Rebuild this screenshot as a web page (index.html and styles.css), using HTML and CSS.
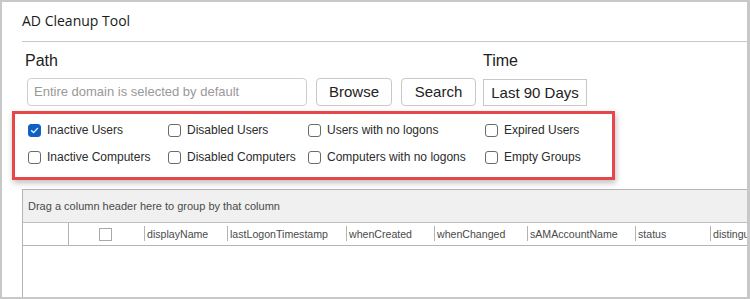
FILE: index.html
```html
<!DOCTYPE html>
<html>
<head>
<meta charset="utf-8">
<link rel="stylesheet" href="styles.css">
</head>
<body>
<div class="frame">
  <div class="inner">
    <div class="title">AD Cleanup Tool</div>
    <div class="controls">
      <div class="group">
        <div class="label">Path</div>
        <div class="row">
          <div class="input">Entire domain is selected by default</div>
          <div class="btn browse">Browse</div>
          <div class="btn search">Search</div>
        </div>
      </div>
      <div class="group">
        <div class="label">Time</div>
        <div class="row">
          <div class="btn time">Last 90 Days</div>
        </div>
      </div>
    </div>
    <div class="options">
      <label class="opt"><span class="cb checked"><svg viewBox="0 0 13 13" width="13" height="13"><path d="M3.6 6.7 L5.6 8.6 L9.5 4.4" fill="none" stroke="#fff" stroke-width="1.3" stroke-linecap="round" stroke-linejoin="round"/></svg></span>Inactive Users</label>
      <label class="opt"><span class="cb"></span>Disabled Users</label>
      <label class="opt"><span class="cb"></span>Users with no logons</label>
      <label class="opt"><span class="cb"></span>Expired Users</label>
      <label class="opt"><span class="cb"></span>Inactive Computers</label>
      <label class="opt"><span class="cb"></span>Disabled Computers</label>
      <label class="opt"><span class="cb"></span>Computers with no logons</label>
      <label class="opt"><span class="cb"></span>Empty Groups</label>
    </div>
    <div class="grid">
      <div class="grouppanel">Drag a column header here to group by that column</div>
      <div class="header">
        <div class="hc first"></div>
        <div class="hc chk"><span class="hcb"></span></div>
        <div class="hc c1">displayName</div>
        <div class="hc c2">lastLogonTimestamp</div>
        <div class="hc c3">whenCreated</div>
        <div class="hc c4">whenChanged</div>
        <div class="hc c5">sAMAccountName</div>
        <div class="hc c6">status</div>
        <div class="hc c7">distinguishedName</div>
      </div>
      <div class="body"></div>
    </div>
  </div>
</div>
</body>
</html>
```

FILE: styles.css
```css
html, body {
  margin: 0;
  padding: 0;
  background: #fff;
}
.frame {
  box-sizing: border-box;
  width: 750px;
  height: 299px;
  border: 2px solid #c8c8c8;
  border-right-width: 3px;
  overflow: hidden;
  font-family: "Liberation Sans", Arial, sans-serif;
  color: #222;
}
.inner {
  padding-left: 20px;
  display: flex;
  flex-direction: column;
}
.title {
  height: 39px;
  line-height: 38px;
  font-family: "Open Sans", "Noto Sans", sans-serif;
  font-size: 14px;
  color: #1a1a1a;
  border-bottom: 1px solid #c8c8c8;
}
.controls {
  display: flex;
  gap: 7px;
  margin-top: 10px;
  padding-left: 5px;
}
.group {
  display: flex;
  flex-direction: column;
  gap: 8px;
}
.label {
  font-size: 16px;
  line-height: 18px;
  margin-left: -2px;
  color: #222;
}
.group + .group .label {
  margin-left: 0;
}
.row {
  display: flex;
  gap: 9px;
}
.input {
  box-sizing: border-box;
  width: 280px;
  height: 28px;
  border: 1px solid #cfcfcf;
  border-radius: 4px;
  padding-left: 6px;
  font-size: 13px;
  line-height: 26px;
  color: #999;
}
.btn {
  box-sizing: border-box;
  height: 28px;
  border: 1px solid #c8c8c8;
  border-radius: 4px;
  font-size: 15px;
  line-height: 26px;
  text-align: center;
  color: #222;
}
.browse { width: 76px; }
.search { width: 75px; }
.time {
  width: 104px;
  height: 27px;
  margin-top: 1px;
  border-radius: 0;
  line-height: 25px;
}
.options {
  box-sizing: border-box;
  width: 603px;
  height: 69px;
  margin-left: -10px;
  margin-top: 5px;
  border: 3px solid #e6474a;
  box-shadow: 1px 3px 6px rgba(0, 0, 0, 0.25);
  padding: 10px 0 0 13px;
  display: grid;
  grid-template-columns: 140px 140px 177px auto;
  grid-auto-rows: 27px;
  align-content: start;
}
.opt {
  display: flex;
  align-items: flex-start;
  gap: 6px;
  font-family: "Liberation Sans", Arial, sans-serif;
  font-size: 12px;
  line-height: 13px;
  color: #2b2b2b;
}
.cb {
  box-sizing: border-box;
  width: 13px;
  height: 13px;
  border: 1px solid #6b6b6b;
  border-radius: 3px;
  background: #fff;
  flex: none;
  display: block;
}
.cb.checked {
  background: #0f62c4;
  border-color: #0f62c4;
  position: relative;
}
.cb.checked svg {
  position: absolute;
  left: -1px;
  top: -1px;
}
.grid {
  margin-top: 9px;
  height: 120px;
  border: 1px solid #b4b4b4;
  border-right: none;
  display: flex;
  flex-direction: column;
}
.grouppanel {
  height: 32px;
  background: #f0f0f0;
  border-bottom: 1px solid #bdbdbd;
  font-size: 11px;
  line-height: 32px;
  padding-left: 5px;
  color: #4a4a4a;
}
.header {
  display: flex;
  height: 22px;
  border-bottom: 1px solid #b4b4b4;
  font-size: 10.6px;
  color: #4a4a4a;
  white-space: nowrap;
  overflow: hidden;
}
.hc {
  box-sizing: border-box;
  flex: none;
  height: 22px;
  line-height: 22px;
  padding-left: 3px;
  position: relative;
  overflow: hidden;
}
.hc::before {
  content: "";
  position: absolute;
  left: 0;
  top: 3px;
  bottom: 4px;
  border-left: 1px solid #b4b4b4;
}
.first {
  width: 45px;
}
.first::before { display: none; }
.chk {
  width: 76px;
  border-left: 1px solid #b4b4b4;
  display: flex;
  align-items: center;
  padding-left: 30px;
}
.chk::before { display: none; }
.hcb {
  display: block;
  width: 13px;
  height: 13px;
  box-sizing: border-box;
  border: 1px solid #a8a8a8;
  background: #fff;
}
.c1 { width: 83px; }
.c2 { width: 119px; }
.c3 { width: 88px; }
.c4 { width: 93px; }
.c5 { width: 108px; }
.c6 { width: 75px; }
.c7 { width: 38px; }
.body {
  flex: 1;
  background: #fff;
}
```
